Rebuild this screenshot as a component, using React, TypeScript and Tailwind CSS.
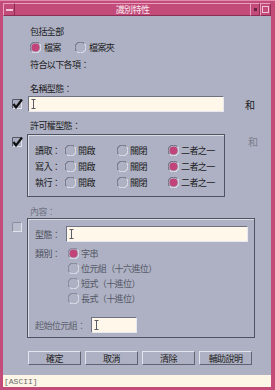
import React from "react";

const FONT = { fontFamily: '"Noto Sans CJK TC", "Noto Sans CJK SC", sans-serif' };

function Radio({ on, dim }: { on?: boolean; dim?: boolean }) {
  return (
    <svg width="11" height="11" viewBox="0 0 11 11" className="shrink-0">
      <path d="M9.4 1.6 A5 5 0 0 0 1.6 9.4" fill="none" stroke={dim ? "#737685" : "#5b5e6c"} strokeWidth="1" />
      <path d="M1.6 9.4 A5 5 0 0 0 9.4 1.6" fill="none" stroke="#eceef4" strokeWidth="1" />
      {on && <circle cx="5.5" cy="5.5" r="4" fill="#c2457a" />}
    </svg>
  );
}

function Check({ on, dim }: { on?: boolean; dim?: boolean }) {
  return (
    <svg width="11" height="11" viewBox="0 0 11 11" className="shrink-0">
      <rect x="0.5" y="0.5" width="9" height="9" fill={dim ? "#b9bccc" : "#a9acbe"} stroke="#e2e4ec" />
      <path d="M0.5 9.5 V0.5 H9.5" fill="none" stroke={dim ? "#8a8d9b" : "#555866"} />
      {on && <path d="M1.5 5 L4 8.5 L10 0.5" fill="none" stroke="#111" strokeWidth="2.2" />}
    </svg>
  );
}

function Beam() {
  return (
    <svg width="5" height="10" viewBox="0 0 5 10" className="ml-[2px]">
      <path d="M0.5 0.5 H4.5 M2.5 0.5 V9.5 M0.5 9.5 H4.5" stroke="#5a5c66" strokeWidth="1" fill="none" />
    </svg>
  );
}

function Field({ w }: { w: string }) {
  return (
    <div className={`${w} h-[16px] bg-[#fff8ea] border border-t-[#6f7282] border-l-[#6f7282] border-r-[#e8e9f0] border-b-[#e8e9f0] flex items-center`}>
      <Beam />
    </div>
  );
}

function Btn({ label }: { label: string }) {
  return (
    <div className="w-[53px] h-[14px] flex items-center justify-center bg-[#aeb1c3] border border-t-[#e3e5ee] border-l-[#e3e5ee] border-r-[#5f6270] border-b-[#5f6270] text-[9px] text-[#222]">
      {label}
    </div>
  );
}

export default function App() {
  const perms = ["讀取：", "寫入：", "執行："];
  const kinds = ["字串", "位元組（十六進位）", "短式（十進位）", "長式（十進位）"];

  return (
    <div style={FONT} className="w-[275px] h-[390px] bg-[#c24b7a] flex flex-col leading-[13px] tracking-[-0.6px] text-[#1c1c22] overflow-hidden">
      <div className="h-[3px] border-t border-[#e08aae]" />
      {/* title bar */}
      <div className="h-[13px] mx-[3px] mr-[4px] flex items-stretch">
        <div className="w-[12px] border border-t-[#e8a0bf] border-l-[#e8a0bf] border-r-[#8d2d55] border-b-[#8d2d55] flex items-center justify-center">
          <div className="w-[7px] h-[2px] bg-[#f2c6d8]" />
        </div>
        <div className="flex-1 flex items-center justify-center text-[9px] text-[#fbe6ee] border-y border-t-[#e8a0bf] border-b-[#8d2d55]">
          識別特性
        </div>
        <div className="w-[10px] border border-t-[#e8a0bf] border-l-[#e8a0bf] border-r-[#8d2d55] border-b-[#8d2d55] flex items-center justify-center">
          <div className="w-[3px] h-[3px] bg-[#6e2146]" />
        </div>
        <div className="w-[11px] border border-t-[#e8a0bf] border-l-[#e8a0bf] border-r-[#8d2d55] border-b-[#8d2d55] flex items-center justify-center">
          <div className="w-[7px] h-[7px] border border-[#f0c4d6]" />
        </div>
      </div>

      {/* body */}
      <div className="h-[359px] ml-[3px] mr-[4px] bg-[#aeb1c3] flex flex-col text-[9px]">
        <div className="ml-[27px] mt-[9px] h-[13px]">包括全部</div>
        <div className="ml-[27px] mt-[3px] h-[13px] flex items-center">
          <Radio on />
          <span className="ml-[3px] w-[31px]">檔案</span>
          <Radio />
          <span className="ml-[3px]">檔案夾</span>
        </div>
        <div className="ml-[27px] mt-[4px] h-[13px]">符合以下各項：</div>

        <div className="ml-[27px] mt-[11px] h-[13px]">名稱型態：</div>
        <div className="mt-[1px] h-[16px] flex items-center">
          <div className="w-[25px] pl-[9px]">
            <Check on />
          </div>
          <Field w="w-[196px]" />
          <span className="ml-[21px] text-[10px]">和</span>
        </div>

        <div className="ml-[27px] mt-[7px] h-[13px]">許可權型態：</div>
        <div className="mt-[2px] flex">
          <div className="w-[24px] pl-[9px] pt-[3px]">
            <Check on />
          </div>
          <div className="w-[198px] h-[63px] border border-[#4f5260] shadow-[inset_1px_1px_0_#d9dbe5] pl-[7px] pt-[7px] flex flex-col">
            {perms.map((p) => (
              <div key={p} className="h-[16px] flex items-center">
                <span className="w-[30px]">{p}</span>
                <div className="w-[52px] flex items-center">
                  <Radio />
                  <span className="ml-[2px]">開啟</span>
                </div>
                <div className="w-[51px] flex items-center">
                  <Radio />
                  <span className="ml-[2px]">關閉</span>
                </div>
                <div className="flex items-center">
                  <Radio on />
                  <span className="ml-[2px]">二者之一</span>
                </div>
              </div>
            ))}
          </div>
          <span className="ml-[23px] mt-[1px] text-[10px] text-[#7a7d8c]">和</span>
        </div>

        <div className="ml-[27px] mt-[8px] h-[13px] text-[#6f7282]">內容：</div>
        <div className="flex">
          <div className="w-[24px] pl-[9px] pt-[4px]">
            <Check dim />
          </div>
          <div className="w-[228px] h-[120px] border border-[#4f5260] shadow-[inset_1px_1px_0_#d9dbe5] pl-[7px] flex flex-col text-[#4a4d5a]">
            <div className="mt-[7px] h-[16px] flex items-center">
              <span className="w-[31px]">型態：</span>
              <Field w="w-[182px]" />
            </div>
            <div className="mt-[4px] flex">
              <span className="w-[33px] h-[15px] flex items-center">類別：</span>
              <div className="flex flex-col">
                {kinds.map((k, i) => (
                  <div key={k} className="h-[15px] flex items-center">
                    <Radio on={i === 0} dim />
                    <span className="ml-[2px] text-[#555866]">{k}</span>
                  </div>
                ))}
              </div>
            </div>
            <div className="mt-[11px] h-[16px] flex items-center">
              <span className="w-[56px] text-[#5c5f6d]">起始位元組：</span>
              <Field w="w-[46px]" />
            </div>
          </div>
        </div>

        <div className="ml-[25px] mt-[13px] flex gap-[4px]">
          <Btn label="確定" />
          <Btn label="取消" />
          <Btn label="清除" />
          <Btn label="輔助說明" />
        </div>
      </div>

      {/* status */}
      <div className="h-[12px] ml-[3px] mr-[4px] bg-[#fdf6e6] flex items-center pl-[1px] text-[8px] text-[#6b6b70] tracking-normal" style={{ fontFamily: '"Liberation Mono", monospace' }}>
        [ASCII]
      </div>
      <div className="h-[3px]" />
    </div>
  );
}
